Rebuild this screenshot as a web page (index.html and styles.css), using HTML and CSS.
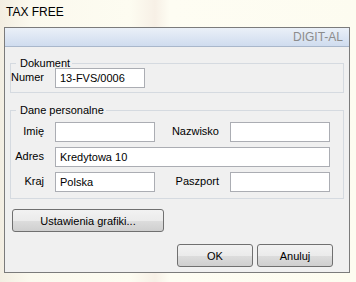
FILE: index.html
```html
<!DOCTYPE html>
<html lang="pl">
<head>
    <meta charset="UTF-8">
    <title>TAX FREE</title>
    <link rel="stylesheet" href="styles.css">
</head>
<body>
    <div class="titlebar">TAX FREE</div>
    <div class="window">
        <div class="header">DIGIT-AL</div>

        <fieldset class="group doc">
            <legend>Dokument</legend>
            <div class="row">
                <label class="lbl">Numer</label>
                <input class="field short" type="text" value="13-FVS/0006">
            </div>
        </fieldset>

        <fieldset class="group person">
            <legend>Dane personalne</legend>
            <div class="grid">
                <label class="lbl">Imię</label>
                <input class="field" type="text">
                <label class="lbl">Nazwisko</label>
                <input class="field" type="text">

                <label class="lbl">Adres</label>
                <input class="field wide" type="text" value="Kredytowa 10">

                <label class="lbl">Kraj</label>
                <input class="field" type="text" value="Polska">
                <label class="lbl">Paszport</label>
                <input class="field" type="text">
            </div>
        </fieldset>

        <button class="btn settings" type="button">Ustawienia grafiki...</button>

        <div class="actions">
            <button class="btn" type="button">OK</button>
            <button class="btn" type="button">Anuluj</button>
        </div>
    </div>
</body>
</html>
```

FILE: styles.css
```css
body {
    margin: 0;
    width: 356px;
    height: 282px;
    overflow: hidden;
    font-family: "Liberation Sans", Arial, sans-serif;
    font-size: 11px;
    color: #000;
    background: linear-gradient(90deg, #f3eee2 0px, #fbf9ee 30px, #fdfcf1 130px, #f7f0e6 155px, #fefdf3 170px, #fdfcf0 100%);
}

.titlebar {
    height: 27px;
    padding-left: 6px;
    line-height: 25px;
    font-size: 12px;
}

.window {
    margin-left: 4px;
    width: 346px;
    height: 246px;
    box-sizing: border-box;
    border: 1px solid #7b7b7b;
    background-color: #f0f0f0;
    display: flex;
    flex-direction: column;
}

.header {
    height: 18px;
    border-bottom: 1px solid #a9b7cb;
    background: linear-gradient(#eaf0f8, #cfdcef);
    color: #8c8c8c;
    font-size: 12px;
    line-height: 18px;
    text-align: right;
    padding-right: 6px;
}

/* group boxes */
.group {
    margin: 0 0 0 5px;
    width: 334px;
    box-sizing: border-box;
    border: 1px solid #d5dae0;
    padding: 0;
}

.group legend {
    margin-left: 5px;
    padding: 0 2px 0 4px;
    line-height: 12px;
}

.doc {
    margin-top: 10px;
    height: 36px;
}

.person {
    margin-top: 11px;
    height: 95px;
}

.row {
    display: flex;
    align-items: center;
    margin-top: -1px;
}

.lbl {
    text-align: right;
    padding-bottom: 3px;
}

.row .lbl {
    width: 32px;
    margin-right: 12px;
}

.grid {
    display: grid;
    grid-template-columns: 33px 100px 53px 100px;
    column-gap: 11px;
    row-gap: 5px;
    align-items: center;
    margin-top: 6px;
}

.field {
    height: 20px;
    width: 100px;
    box-sizing: border-box;
    border: 1px solid #abadb3;
    background: #fff;
    padding: 0 4px;
    margin: 0;
    font-family: "Liberation Sans", Arial, sans-serif;
    font-size: 11px;
    color: #000;
    outline: none;
}

.short {
    width: 90px;
}

.wide {
    grid-column: 2 / 5;
    width: 275px;
}

/* buttons */
.btn {
    height: 23px;
    box-sizing: border-box;
    border: 1px solid #707070;
    border-radius: 3px;
    background: linear-gradient(#f2f2f2 0%, #ebebeb 50%, #dddddd 51%, #cfcfcf 100%);
    font-family: "Liberation Sans", Arial, sans-serif;
    font-size: 11px;
    color: #000;
    padding: 0;
    margin: 0;
}

.settings {
    margin: 10px 0 0 7px;
    width: 152px;
}

.actions {
    display: flex;
    gap: 4px;
    margin: 12px 0 0 172px;
}

.actions .btn {
    width: 76px;
}
```
